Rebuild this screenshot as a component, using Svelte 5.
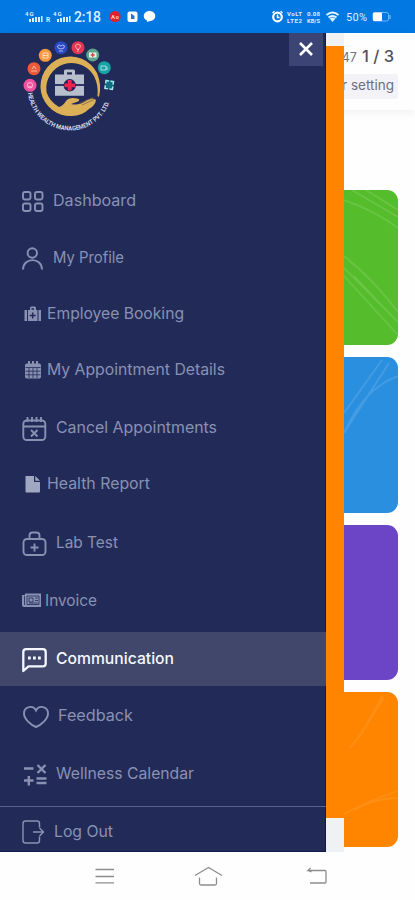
<script>
  const items = [
    { id: 'dash', label: 'Dashboard', h: 56, x: 53, w: 83, dy: -0.5 },
    { id: 'user', label: 'My Profile', h: 56, x: 53, w: 71, dy: 0.5 },
    { id: 'kit', label: 'Employee Booking', h: 56, x: 47, w: 137, dy: 0.5 },
    { id: 'cal', label: 'My Appointment Details', h: 57, x: 47, w: 178, dy: 0.5 },
    { id: 'cancel', label: 'Cancel Appointments', h: 58, x: 56, w: 161, dy: 0.5 },
    { id: 'file', label: 'Health Report', h: 57, x: 47, w: 103, dy: -0.5 },
    { id: 'lab', label: 'Lab Test', h: 59, x: 56, w: 62, dy: 0.5 },
    { id: 'invoice', label: 'Invoice', h: 60, x: 45, w: 52, dy: -1 },
    { id: 'chat', label: 'Communication', h: 54, x: 56, w: 118, dy: -0.5, active: true },
    { id: 'heart', label: 'Feedback', h: 59, x: 58, w: 75, dy: 0 },
    { id: 'math', label: 'Wellness Calendar', h: 61, x: 56, w: 138, dy: -2 },
    { id: 'out', label: 'Log Out', h: 46, x: 54, w: 59, dy: 2.5, rule: true }
  ];
  const badges = [
    [30, 85.3, '#f0529f'], [34, 68.7, '#ee5a36'], [45.3, 55.3, '#f6993f'], [61, 47.7, '#2b49c4'],
    [78, 47.7, '#e5374f'], [92.7, 55, '#5da58b'], [104.3, 67.7, '#18a3a8']
  ];
</script>

<div class="phone">
  <header class="status">
    <svg width="415" height="33" viewBox="0 0 415 33" fill="#d9efff">
      <g font-family="Roboto, sans-serif" font-weight="700">
        <text x="25" y="15.500" font-size="6" textLength="8.500">4G</text>
        <path d="M29 19h2v3h-2zM32 18h2v4h-2zM35 17h2v5h-2zM38 17h2v5h-2zM41 16h1.500v6H41z" />
        <text x="46" y="22" font-size="6.500">R</text>
        <text x="53" y="15.500" font-size="6" textLength="8.500">4G</text>
        <path d="M57 19h2v3h-2zM60 18h2v4h-2zM63 17h2v5h-2zM66 17h2v5h-2zM69 16h1.500v6H69z" />
        <text x="74" y="22" font-size="14" font-weight="500" textLength="27">2:18</text>
        <circle cx="115" cy="16.500" r="5.600" fill="#e3202e" />
        <text x="111" y="19" font-size="6" textLength="8" fill="#ffc9cb">Ao</text>
        <rect x="127.500" y="11.500" width="10" height="10.500" rx="2" fill="#fff" />
        <path d="M131 13.500v5.500h3.500v-3z" fill="#2876c5" />
        <path d="M149.500 11c3.300 0 5.800 2.200 5.800 5s-2.500 5-5.300 5l-3 1v-1.600c-2-.8-3.200-2.400-3.200-4.400 0-2.800 2.500-5 5.700-5z" fill="#fff" />
        <circle cx="277.500" cy="17" r="4.300" fill="none" stroke="#fff" stroke-width="2.200" />
        <path d="M277.500 14.500V17.500H279.500M272.500 13l2-1.800M282.500 13l-2-1.800" fill="none" stroke="#fff" stroke-width="1.400" />
        <text x="287" y="16" font-size="6" textLength="15">VoLT</text>
        <text x="287" y="22.800" font-size="6" textLength="15">LTE2</text>
        <text x="307" y="16" font-size="6" textLength="13">0.08</text>
        <text x="307" y="22.800" font-size="5.800" textLength="13">KB/S</text>
      </g>
      <g fill="none" stroke="#e6f5ff" stroke-width="2">
        <path d="M326.500 15q6-5 12 0M328.500 17.500q4-3 8 0" />
      </g>
      <path d="M329.500 18.500q3-2 6 0l-3 3.500z" />
      <text x="346" y="21" font-family="Roboto, sans-serif" font-size="11" textLength="21">50%</text>
      <rect x="373" y="12.500" width="15.500" height="8.500" rx="2" fill="none" stroke="#6db8f5" />
      <rect x="373" y="12.500" width="9" height="8.500" rx="1" fill="#fff" />
      <path d="M390 15v4" stroke="#6db8f5" stroke-width="1.300" />
    </svg>
  </header>

  <div class="stage">
    <main>
      <div class="top">
        <div class="count"><span>47</span><b>1 / 3</b></div>
        <div class="chip">r setting</div>
      </div>
      <div class="cards">
        <div class="card green">
          <svg viewBox="0 0 54 155"><path d="M8 0L54 27M22 0L54 20M0 10Q30 20 54 38M0 66Q30 90 54 122M0 78L54 132M0 86L54 145M10 86L50 128" /></svg>
        </div>
        <div class="card blue">
          <svg viewBox="0 0 54 155"><path d="M0 56L38 3M0 76L45 6M0 76Q20 31 54 19" /></svg>
        </div>
        <div class="card purple"></div>
        <div class="card orange">
          <svg viewBox="0 0 54 155"><path d="M6 56Q20 40 38 4M14 47L40 5M0 122Q25 108 54 99M10 118Q30 106 54 106" /></svg>
        </div>
      </div>
    </main>

    <aside>
      <nav class="drawer">
        <div class="brand">
          <svg width="130" height="110" viewBox="0 33 130 110">
            <defs><path id="ring-text" d="M28 93A42 42 0 0 0 111.500 93" /></defs>
            {#each badges as [cx, cy, color]}
              <circle {cx} {cy} r="6.500" fill={color} />
            {/each}
            <g fill="none" stroke="#fff" stroke-opacity=".6" stroke-width="1">
              <circle cx="30" cy="85.300" r="2.700" /><path d="M28.500 86q1.500 2 3 0" />
              <path d="M31 71h6M32 69l2-3 2 3" />
              <path d="M43 53h5v5h-5zM43 55.500h5" />
              <path d="M57.500 46q1.500-2 3.500 0 2-2 3.500 0 0 3-3.500 3-3.500 0-3.500-3zM59 51h4" />
              <path d="M75.500 45.500q2.500-3 5 0 0 2-2.500 4.500-2.500-2.500-2.500-4.500zM78 49v3" />
              <path d="M101 66h5v4h-5zM107 67v3" />
            </g>
            <rect x="89" y="52.500" width="7.500" height="5" fill="#e7f4e8" />
            <path d="M92.700 53v4M90.700 55h4" stroke="#d5414e" stroke-width="1.300" />
            <g transform="rotate(8 109.300 84.700)">
              <rect x="104.800" y="80.200" width="9" height="9" fill="#146c83" />
              <path d="M105.500 84v-3h3M110 81h3v3M113 86v3h-3M108.500 89h-3v-3" fill="none" stroke="#a7e6e8" stroke-width="1.500" />
            </g>
            <path d="M99 97Q102 85 97 73A29.800 29.800 0 1 0 72 116Q82 116 89 109Q95 106 96 100Q94 97 87 100Q79 106 71 104L78 101.500Q81 99 77 98.500Q69 97 66 101Q63 106 59 107Q49 101 46.500 92A25.500 25.500 0 0 1 94 76Q98.500 85 97.500 96z" fill="#dbb057" />
            <path d="M79 103.500l14-6M82 105l13-6" stroke="#745b49" stroke-width=".7" />
            <path d="M55 74.500h9v-3.500q0-1.500 1.500-1.500h8q1.500 0 1.500 1.500v3.500h9V95.700H55z" fill="#b7bfcc" />
            <path d="M67 72.300h5v2.200h-5z" fill="#20295a" />
            <path d="M54.500 85h30" stroke="#20295a" stroke-width="1.800" />
            <circle cx="69.700" cy="85.300" r="6.200" fill="#20295a" />
            <path d="M69.700 80v10.600M64.400 85.300H75" stroke="#eb244b" stroke-width="3.800" />
            <text class="ring"><textPath href="#ring-text" textLength="113" lengthAdjust="spacingAndGlyphs">HEALTH WEALTH MANAGEMENT PVT. LTD.</textPath></text>
          </svg>
          <button aria-label="Close">
            <svg width="34" height="33" viewBox="0 0 34 33"><path d="M11 10l12 12M23 10L11 22" stroke="#fff" stroke-width="2.600" /></svg>
          </button>
        </div>

        {#each items as item}
          <div class="row" class:active={item.active} class:rule={item.rule} style="height:{item.h}px">
            <svg class="line" width="326" height="46" viewBox="0 -23 326 46" style="top:{item.dy}px">
              {#if item.id === 'dash'}
                <g class="o"><rect x="23" y="-9" width="7.500" height="7.500" rx="2" /><rect x="35" y="-9" width="7.500" height="7.500" rx="2" /><rect x="23" y="2.500" width="7.500" height="7.500" rx="2" /><rect x="35" y="2.500" width="7.500" height="7.500" rx="2" /></g>
              {:else if item.id === 'user'}
                <g class="o"><circle cx="32.300" cy="-5" r="4.700" /><path d="M23 11.500C23-1 42-1 42 11.500" /></g>
              {:else if item.id === 'kit'}
                <path class="f" d="M24.500-4H27v11h-2.500zM38.500-4H41v11h-2.500zM28-4h2v-2q0-1.500 1.500-1.500h3q1.500 0 1.500 1.500v2h1.500V7H28z" />
                <path class="d" d="M31.500-5h2.500M32.700-1.500v6M29.700 1.500h6" />
              {:else if item.id === 'cal'}
                <rect class="f" x="25" y="-6.500" width="16" height="15" rx="1.800" />
                <path class="s" d="M29-9v4M33-9v4M37-9v4" /><path class="g" d="M25.500-2.500h15M25.500 1.200h15M25.500 4.800h15M29-2v10M33-2v10M37-2v10" />
              {:else if item.id === 'cancel'}
                <g class="o"><rect x="23.300" y="-7.500" width="22" height="19.500" rx="3.500" /><path d="M23-1.500h22M27.500-11v5M32-11v5M36.500-11v5M41-11v5" /><path d="M31 2l6.500 6.500M37.500 2L31 8.500" /></g>
              {:else if item.id === 'file'}
                <path class="f b" d="M25.500-8h8.500v6h6V7.500q0 1-1 1H26.500q-1 0-1-1zM35.300-8L40-3.300h-4.700z" />
              {:else if item.id === 'lab'}
                <g class="o"><rect x="23.500" y="-4" width="22" height="16" rx="3.500" /><path d="M29.500-4v-3.500q0-3 3-3h4q3 0 3 3V-4M34.500.500v8M30.500 4.500h8" /></g>
              {:else if item.id === 'invoice'}
                <path class="f" d="M25-7.500h16v13.500H24q-2 0-2-2V-6h3z" />
                <path class="g" d="M24.500-5V4M27-5h12V3.500H27zM29-3h4v4h-4zM35-3h3M35-.500h3M29 2h9" />
              {:else if item.id === 'chat'}
                <path class="o" d="M23.300 12V-7q0-2.800 2.800-2.800h16.800q2.800 0 2.800 2.800V4.500q0 2.800-2.800 2.800H28.500z" stroke-linejoin="round" style="stroke-width:2.300" />
                <path class="s" d="M28-1h2.800M33-1h2.800M38-1h2.800" style="stroke-width:2.800" />
              {:else if item.id === 'heart'}
                <path class="o" d="M36 11C31 9 24 3 24-2.500C24-9.500 33-11.500 36-5.500C39-11.500 48-9.500 48-2.500C48 3 41 9 36 11z" />
              {:else if item.id === 'math'}
                <path class="s m" d="M24-5.500h9.500M37.500-9l8 8M45.500-9l-8 8M24 6.500h9.500M28.800 2v9.500M36.500 4.500h10M36.500 9h10" />
              {:else}
                <path class="o thin" d="M39.500-4.500V-8.500q0-2.500-2.500-2.500H25.500q-2.500 0-2.500 2.500V8.500q0 2.500 2.500 2.500H37q2.500 0 2.500-2.500V4.500M33 0h10M39.500-4L43.500 0l-4 4" />
              {/if}
              <text x={item.x} y="5" textLength={item.w} lengthAdjust="spacingAndGlyphs">{item.label}</text>
            </svg>
          </div>
        {/each}
      </nav>
      <div class="gutter"><div></div></div>
    </aside>
  </div>

  <footer>
    <svg width="415" height="48" viewBox="0 852 415 48" fill="none" stroke="#8d8d8d" stroke-width="1.300">
      <path d="M95.500 869.500H114M95.500 876.500H114M95.500 882.800H114" />
      <path d="M195 875.500L208.500 867.500L222 875.500M199.500 877.500V883.500q0 1.500 1.500 1.500H215q1.500 0 1.500-1.500V877.500" />
      <path d="M310.500 868L308 870.500H325q1 0 1 1V882q0 1-1 1H310M308 870.500l3.500 1.500" />
    </svg>
  </footer>
</div>

<style>
  :global(body) { margin: 0; background: #fff; }
  .phone { width: 415px; height: 900px; display: flex; flex-direction: column; overflow: hidden; background: #fefefe; font-family: Inter, sans-serif; }
  svg { display: block; }
  .status { height: 33px; background: #0278e3; flex: none; }
  .stage { height: 819px; position: relative; flex: none; }
  main { height: 819px; display: flex; flex-direction: column; }
  .top { height: 77px; box-sizing: border-box; padding: 11px 17px 0 0; display: flex; flex-direction: column; align-items: flex-end; box-shadow: 0 3px 8px #0000000d; }
  .count { display: flex; align-items: baseline; gap: 5px; font-size: 12.500px; line-height: 24px; color: #72727c; margin-right: 4px; }
  .count b { font-size: 16.500px; font-weight: 500; color: #51515d; }
  .chip { height: 25px; line-height: 22px; margin-top: 4px; padding: 0 4px 0 10px; background: #f3f2f6; color: #6e6e7d; font-size: 13.500px; border-radius: 2px; }
  .cards { padding: 80px 17px 0 17px; display: flex; flex-direction: column; gap: 12px; }
  .card { height: 155.300px; border-radius: 11px; display: flex; justify-content: flex-end; overflow: hidden; }
  .card svg { width: 54px; height: 155px; fill: none; stroke: #fff; stroke-opacity: .12; stroke-width: 1.800; }
  .card.orange svg { stroke-opacity: .08; }
  .green { background: #55bd2b; }
  .blue { background: #2b8fe0; }
  .purple { background: #6b45c6; }
  .orange { background: #ff8500; }
  aside { position: absolute; inset: 0 auto 0 0; width: 344px; display: flex; }
  .drawer { width: 326px; background: #222b58; box-shadow: inset -1px -1px #101b48; }
  .brand { height: 140px; display: flex; justify-content: space-between; align-items: flex-start; }
  .brand button { width: 34px; height: 33px; padding: 0; margin-right: 3px; border: 0; background: #3b4475; }
  .ring { fill: #d3d8e5; font: 700 6.300px Roboto, sans-serif; }
  .row { display: flex; align-items: center; overflow: hidden; color: #8991b3; box-sizing: border-box; }
  .line { position: relative; flex: none; overflow: visible; }
  .line text { font-size: 16px; fill: currentColor; stroke: none; }
  .active { background: #40476b; color: #f5f7ff; }
  .active text { font-weight: 500; }
  .rule { border-top: 1px solid #56628b; }
  .o { fill: none; stroke: currentColor; stroke-width: 1.900; }
  .thin { stroke-width: 1.400; }
  .f { fill: currentColor; }
  .b { fill: #a0a8c1; }
  .s { fill: none; stroke: currentColor; stroke-width: 2; }
  .m { stroke-width: 2.400; }
  .d { fill: none; stroke: #222b58; stroke-width: 1.500; }
  .g { fill: none; stroke: #222b58; stroke-width: .8; }
  .gutter { width: 18px; box-sizing: border-box; padding: 13px 0 34px; background: #f0f1f2; display: flex; }
  .gutter div { width: 18px; background: #ff8500; }
  footer { height: 48px; background: #fefefe; flex: none; }
</style>
